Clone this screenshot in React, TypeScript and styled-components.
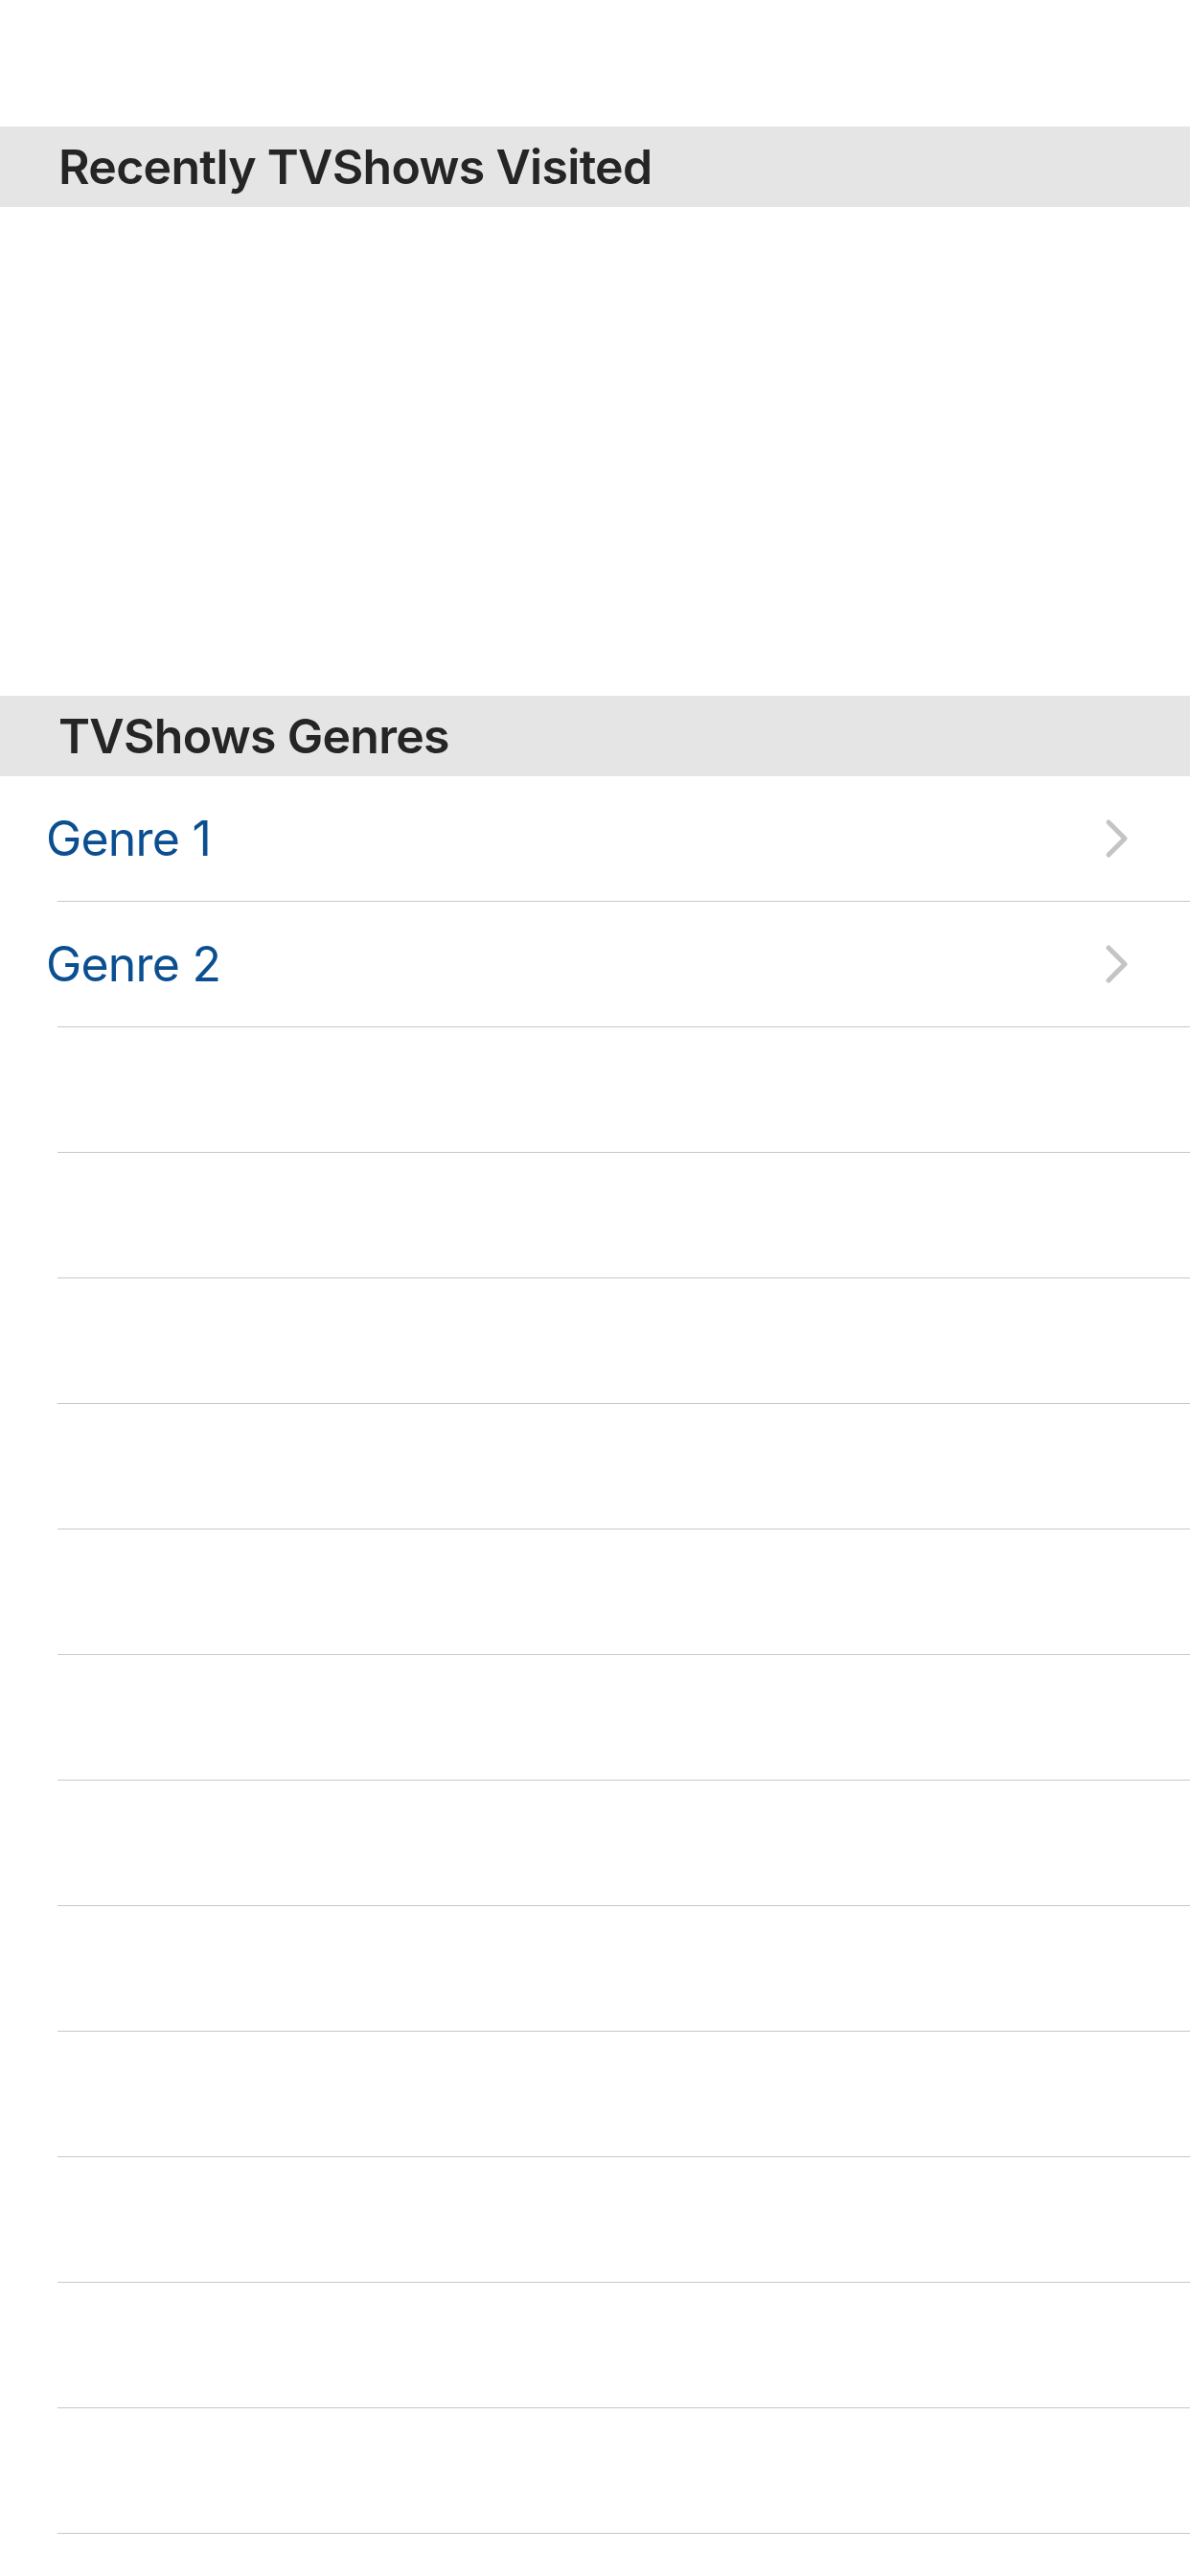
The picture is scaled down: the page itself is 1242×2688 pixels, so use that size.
import styled, { createGlobalStyle } from "styled-components";

const GlobalStyle = createGlobalStyle`
    html, body {
        margin: 0;
        padding: 0;
        background: #ffffff;
        overflow: hidden;
    }
    body {
        font-family: Inter, "Noto Sans", "Liberation Sans", sans-serif;
        -webkit-font-smoothing: antialiased;
    }
`;

const Screen = styled.div`
    width: 1242px;
    height: 2688px;
    overflow: hidden;
    background: #ffffff;
    padding-top: 132px;
    box-sizing: border-box;
`;

const SectionHeader = styled.div`
    height: 84px;
    background: #e5e5e5;
    display: flex;
    align-items: center;
    padding-left: 61px;
    box-sizing: border-box;
    color: #252525;
    font-size: 50px;
    font-weight: 600;
    letter-spacing: -0.7px;
`;

const RecentArea = styled.div`
    height: 510px;
`;

const Row = styled.div`
    height: 130px;
    display: flex;
    align-items: center;
    justify-content: space-between;
    padding: 0 64px 0 48px;
    box-sizing: border-box;
`;

const GenreLabel = styled.span`
    color: #0b4f91;
    font-size: 50px;
    font-weight: 400;
    letter-spacing: -0.8px;
`;

const Divider = styled.div`
    height: 1px;
    margin-left: 60px;
    background: #c8c7cc;
`;

const Chevron = () => (
    <svg width="26" height="42" viewBox="0 0 26 42">
        <polyline
            points="5,4 22,21 5,38"
            fill="none"
            stroke="#c4c4c6"
            strokeWidth="5"
            strokeLinecap="round"
            strokeLinejoin="round"
        />
    </svg>
);

const genres = ["Genre 1", "Genre 2"];
const emptyRows = Array.from({ length: 14 });

export default function App() {
    return (
        <>
            <GlobalStyle />
            <Screen>
                <SectionHeader>Recently TVShows Visited</SectionHeader>
                <RecentArea />
                <SectionHeader>TVShows Genres</SectionHeader>
                {genres.map((g) => (
                    <div key={g}>
                        <Row>
                            <GenreLabel>{g}</GenreLabel>
                            <Chevron />
                        </Row>
                        <Divider />
                    </div>
                ))}
                {emptyRows.map((_, i) => (
                    <div key={i}>
                        <Row />
                        <Divider />
                    </div>
                ))}
            </Screen>
        </>
    );
}
